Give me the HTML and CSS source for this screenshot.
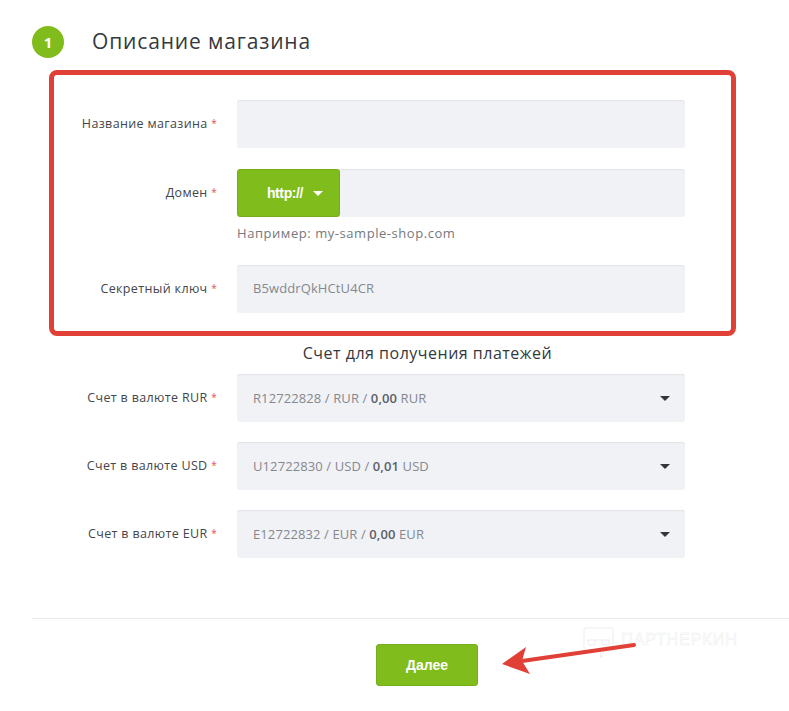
FILE: index.html
```html
<!DOCTYPE html>
<html lang="ru">
<head>
<meta charset="utf-8">
<title>Описание магазина</title>
<link rel="stylesheet" href="styles.css">
</head>
<body>
<main class="page">
  <header class="step">
    <span class="step-num">1</span>
    <h1 class="step-title">Описание магазина</h1>
  </header>

  <section class="frame">
    <div class="row">
      <label class="label">Название магазина <i class="req">*</i></label>
      <div class="field"></div>
    </div>
    <div class="row">
      <label class="label">Домен <i class="req">*</i></label>
      <div class="field-wrap">
        <div class="field field-domain">
          <button class="proto">http:// <span class="caret caret-white"></span></button>
        </div>
        <p class="hint">Например: my-sample-shop.com</p>
      </div>
    </div>
    <div class="row">
      <label class="label">Секретный ключ <i class="req">*</i></label>
      <div class="field">B5wddrQkHCtU4CR</div>
    </div>
  </section>

  <h2 class="subtitle">Счет для получения платежей</h2>

  <section class="accounts">
    <div class="row">
      <label class="label">Счет в валюте RUR <i class="req">*</i></label>
      <div class="field field-select"><span>R12722828 / RUR / <b>0,00</b> RUR</span><span class="caret"></span></div>
    </div>
    <div class="row">
      <label class="label">Счет в валюте USD <i class="req">*</i></label>
      <div class="field field-select"><span>U12722830 / USD / <b>0,01</b> USD</span><span class="caret"></span></div>
    </div>
    <div class="row">
      <label class="label">Счет в валюте EUR <i class="req">*</i></label>
      <div class="field field-select"><span>E12722832 / EUR / <b>0,00</b> EUR</span><span class="caret"></span></div>
    </div>
  </section>

  <footer class="actions">
    <button class="next">Далее</button>
  </footer>
</main>

<div class="watermark">
  <svg class="wm-icon" width="31" height="32" viewBox="0 0 31 32" fill="none" stroke="#ededed" stroke-width="1">
    <path d="M3 1h25a2 2 0 0 1 2 2v19a2 2 0 0 1-2 2H21l-3 7-1-7H3a2 2 0 0 1-2-2V3a2 2 0 0 1 2-2z"/>
    <path d="M4 13h23M5 13v3a2 2 0 0 0 2 2h3a2 2 0 0 0 2-3v-2M19 13v3a2 2 0 0 0 2 2h3a2 2 0 0 0 2-3v-2"/>
  </svg>
  <span class="wm-text">ПАРТНЕРКИН</span>
</div>

<svg class="arrow" width="789" height="711" viewBox="0 0 789 711">
  <path d="M634 645 522 661" stroke="#e04035" stroke-width="4" stroke-linecap="round" fill="none"/>
  <path d="M502 664 526 647 522 661 530 674z" fill="#e04035"/>
</svg>
</body>
</html>
```

FILE: styles.css
```css
* { box-sizing: border-box; }

html, body { margin: 0; padding: 0; background: #fff; }

body {
  width: 789px;
  height: 711px;
  overflow: hidden;
  position: relative;
  font-family: "Open Sans", "Noto Sans", sans-serif;
  color: #3c3f44;
}

.page { padding: 26px 0 0 32px; }

.step {
  display: flex;
  align-items: center;
  gap: 28px;
  height: 32px;
}

.step-num {
  width: 32px;
  height: 32px;
  border-radius: 50%;
  background: #80bc1c;
  color: #fff;
  font-size: 15px;
  font-weight: 700;
  display: flex;
  align-items: center;
  justify-content: center;
}

.step-title {
  margin: -2px 0 0;
  font-size: 21px;
  font-weight: 400;
  line-height: 32px;
  letter-spacing: 0.85px;
  color: #35383d;
}

.frame {
  margin: 12px 0 0 17px;
  width: 687px;
  height: 266px;
  border: 5px solid #e04035;
  border-radius: 8px;
  padding: 25px 0 0;
  display: flex;
  flex-direction: column;
  gap: 21px;
}

.row {
  display: grid;
  grid-template-columns: 163px 448px;
  column-gap: 20px;
  align-items: start;
}

.label {
  font-size: 12.5px;
  line-height: 48px;
  text-align: right;
  letter-spacing: 0.35px;
  color: #43464b;
}

.req {
  font-style: normal;
  font-size: 10px;
  color: #e0544c;
  position: relative;
  top: -1px;
}

.field {
  height: 48px;
  background: #f1f2f6;
  border-radius: 3px;
  box-shadow: inset 0 1px 1px #e2e3e7;
  padding: 0 16px;
  font-size: 13px;
  line-height: 47px;
  letter-spacing: 0.1px;
  color: #85888e;
}

.field-wrap { display: block; }

.field-domain { padding: 0; }

.proto {
  width: 103px;
  height: 48px;
  border: 1px solid #76ad18;
  border-radius: 3px;
  background: #80bc1c;
  color: #fff;
  font-family: "Liberation Sans", sans-serif;
  font-size: 14px;
  font-weight: 700;
  letter-spacing: -0.4px;
  display: flex;
  align-items: center;
  justify-content: center;
  gap: 10px;
  padding: 0 0 0 13px;
}

.hint {
  margin: 0;
  height: 27px;
  padding-top: 7px;
  font-size: 13px;
  line-height: 18px;
  letter-spacing: 0.55px;
  color: #75787e;
}

.subtitle {
  margin: 6px 0 0 17px;
  width: 687px;
  padding-left: 70px;
  text-align: center;
  font-size: 16px;
  font-weight: 400;
  line-height: 22px;
  letter-spacing: 0.5px;
  color: #35383d;
}

.accounts {
  margin: 10px 0 0 22px;
  display: flex;
  flex-direction: column;
  gap: 20px;
}

.field-select {
  display: flex;
  align-items: center;
  justify-content: space-between;
  padding-right: 15px;
}

.field-select b { font-weight: 600; color: #5d6066; }

.caret {
  width: 0;
  height: 0;
  border-left: 5px solid transparent;
  border-right: 5px solid transparent;
  border-top: 5px solid #33363b;
}

.caret-white { border-top-color: #fff; }

.actions {
  margin-top: 60px;
  border-top: 1px solid #e9eaec;
  padding: 25px 0 0 344px;
}

.next {
  display: block;
  width: 102px;
  height: 42px;
  border: 1px solid #76ad18;
  border-radius: 3px;
  background: #80bc1c;
  color: #fff;
  font-family: "Liberation Sans", sans-serif;
  font-size: 14px;
  font-weight: 700;
}

.watermark {
  position: absolute;
  left: 583px;
  top: 627px;
  display: flex;
  align-items: flex-start;
  gap: 7px;
}

.wm-text {
  margin-top: 3px;
  font-family: "Liberation Sans", sans-serif;
  font-size: 16.5px;
  line-height: 18px;
  letter-spacing: 0.6px;
  color: #fff;
  -webkit-text-stroke: 0.5px #ededed;
}

.arrow {
  position: absolute;
  left: 0;
  top: 0;
  pointer-events: none;
}
```
